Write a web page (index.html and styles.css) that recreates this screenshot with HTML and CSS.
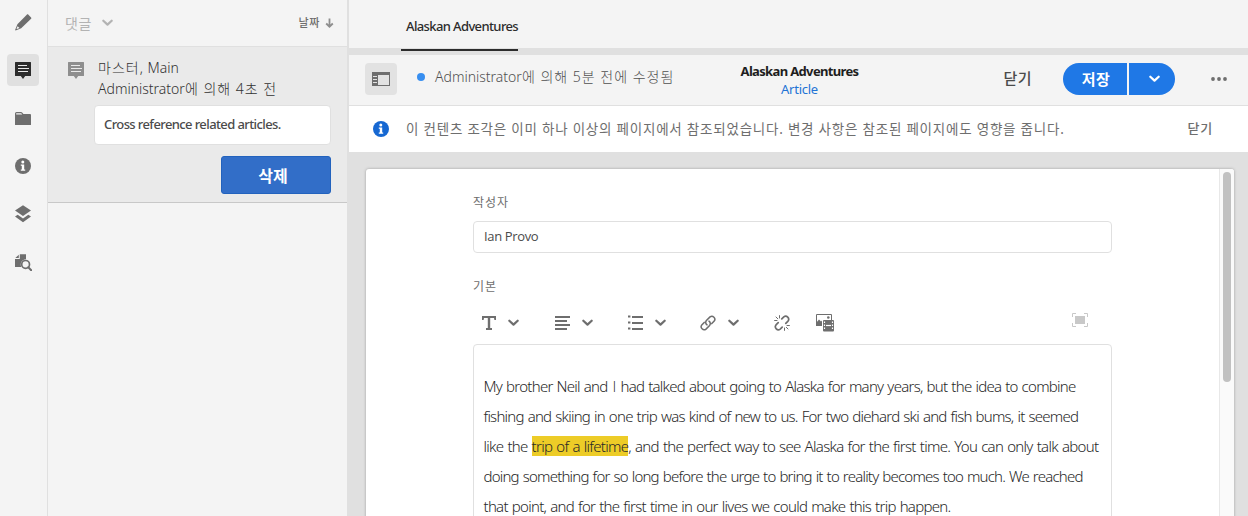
FILE: index.html
```html
<!DOCTYPE html>
<html lang="ko">
<head>
<meta charset="utf-8">
<title>Alaskan Adventures</title>
<link rel="stylesheet" href="styles.css">
</head>
<body>
<svg class="defs" width="0" height="0" aria-hidden="true">
  <symbol id="chevron" viewBox="0 0 10 7"><path d="M1.200 1.400 5 5 8.800 1.400" fill="none" stroke="currentColor" stroke-width="2" stroke-linecap="round" stroke-linejoin="round"/></symbol>
  <symbol id="comment" viewBox="0 0 16 17"><path fill="currentColor" d="M.5 0h15a.5.5 0 0 1 .5.5v13a.5.5 0 0 1-.5.5h-5.300L8 17l-2.200-3H.5a.5.5 0 0 1-.5-.5V.5A.5.5 0 0 1 .5 0Z"/><path class="comment-lines" d="M3 3.500h9M3 6.500h11M3 9.500h10"/></symbol>
  <symbol id="info" viewBox="0 0 16 16"><circle cx="8" cy="8" r="8" fill="currentColor"/><circle class="info-mark" cx="7.800" cy="3.900" r="1.500"/><path class="info-mark" d="M5.800 6.500h3.400v5h1v1.300H5.800v-1.300h1V7.800h-1Z"/></symbol>
</svg>
<div class="app">
  <nav class="rail">
    <a class="rail-item"><svg width="17" height="17" viewBox="0 0 17 17"><path fill="currentColor" d="m13.200.5 2.900 2.900c.4.400.4.900 0 1.300L6.200 14.300.6 16.400l-.5-.5 2.300-5.600L12 .5c.4-.4.800-.4 1.200 0Z"/><path class="pencil-tip" d="m2.600 12.200 1.900 1.900-2.500 1-.5-.5Z"/></svg></a>
    <a class="rail-item selected"><svg width="16" height="17"><use href="#comment"/></svg></a>
    <a class="rail-item"><svg width="16" height="13" viewBox="0 0 16 13"><path fill="currentColor" d="M0 1.500Q0 0 1.500 0h4.300Q7 0 7.600 1l.8 1H15q1 0 1 1v9.500q0 .5-.5.500H.5q-.5 0-.5-.5Z"/><path class="folder-tab" d="M1.200 1.200h5l1 1.400H1.200Z"/></svg></a>
    <a class="rail-item"><svg width="16" height="16"><use href="#info"/></svg></a>
    <a class="rail-item"><svg width="16" height="18" viewBox="0 0 16 18"><path fill="currentColor" d="m8 .3 8 5.300-8 5.400-8-5.400ZM2.700 9.800 8 13.400l5.300-3.600 2.700 1.800-8 5.700-8-5.700Z"/></svg></a>
    <a class="rail-item"><svg width="17" height="17" viewBox="0 0 17 17"><path fill="currentColor" d="M4.800.300h6.200v5A5.300 5.300 0 0 0 6.300 13H0V5h4.800ZM3.800.700V4H.3Z"/><circle cx="10.600" cy="10.400" r="3.900" fill="none" stroke="currentColor" stroke-width="1.700"/><path d="m13.300 13.200 2.900 3" stroke="currentColor" stroke-width="2" stroke-linecap="round"/></svg></a>
  </nav>

  <aside class="panel">
    <header class="panel-head">
      <span class="panel-title">댓글</span>
      <svg class="panel-chevron" width="11" height="8"><use href="#chevron"/></svg>
      <span class="sort">날짜</span>
      <svg class="sort-arrow" width="9" height="10" viewBox="0 0 9 10"><path d="M4.500.5v8M1.200 5.500 4.500 8.700l3.300-3.200" fill="none" stroke="currentColor" stroke-width="1.800"/></svg>
    </header>
    <article class="note">
      <svg class="note-icon" width="16" height="17"><use href="#comment"/></svg>
      <div class="note-meta"><div><span class="ko">마스터,</span> Main</div><div>Administrator<span class="ko">에 의해 4초 전</span></div></div>
      <p class="note-text">Cross reference related articles.</p>
      <button class="delete">삭제</button>
    </article>
  </aside>

  <main class="main">
    <div class="tabs"><span class="tab">Alaskan Adventures</span></div>
    <header class="toolbar">
      <button class="toggle"><svg width="18" height="14" viewBox="0 0 18 14"><path fill="currentColor" fill-rule="evenodd" d="M0 0h18v14H0ZM6 3v10h11V3ZM1 4h4v1H1ZM1 7h4v1H1ZM1 10h4v1H1Z"/></svg></button>
      <i class="dot"></i>
      <span class="modified">Administrator<span class="ko">에 의해 5분 전에 수정됨</span></span>
      <div class="title"><b>Alaskan Adventures</b><a>Article</a></div>
      <span class="close">닫기</span>
      <div class="save"><button class="save-main">저장</button><button class="save-more"><svg width="11" height="8"><use href="#chevron"/></svg></button></div>
      <svg class="more" width="16" height="4" viewBox="0 0 16 4"><g fill="currentColor"><circle cx="2" cy="2" r="1.900"/><circle cx="8" cy="2" r="1.900"/><circle cx="14" cy="2" r="1.900"/></g></svg>
    </header>
    <div class="alert">
      <svg class="alert-icon" width="16" height="16"><use href="#info"/></svg>
      <span class="alert-text">이 컨텐츠 조각은 이미 하나 이상의 페이지에서 참조되었습니다. 변경 사항은 참조된 페이지에도 영향을 줍니다.</span>
      <span class="alert-close">닫기</span>
    </div>
    <div class="canvas">
      <section class="paper">
        <div class="form">
          <label class="label">작성자</label>
          <div class="input">Ian Provo</div>
          <label class="label body-label">기본</label>
          <div class="rte-bar">
            <span class="tool"><svg width="14" height="14" viewBox="0 0 14 14"><path fill="currentColor" d="M0 0h14v4h-1.600L12 2H8.200v10H10v2H4v-2h1.800V2H2l-.4 2H0Z"/></svg><svg width="11" height="8"><use href="#chevron"/></svg></span>
            <span class="tool"><svg width="15" height="14" viewBox="0 0 15 14"><path d="M0 1h15M0 5h12M0 9h15M0 13h12" stroke="currentColor" stroke-width="1.900"/></svg><svg width="11" height="8"><use href="#chevron"/></svg></span>
            <span class="tool"><svg width="15" height="15" viewBox="0 0 15 15"><path d="M4 2h11M4 8h11M4 14h11" stroke="currentColor" stroke-width="1.900"/><path d="M0 1.500h2.400M0 7.500h2.400M0 13.500h2.400" stroke="currentColor" stroke-width="2"/></svg><svg width="11" height="8"><use href="#chevron"/></svg></span>
            <span class="tool link"><svg width="16" height="16" viewBox="0 0 16 16"><g fill="none" stroke="currentColor" stroke-width="1.500" stroke-linecap="round"><path d="M7 9.900a2.900 2.900 0 0 1-.6-4.300l3.600-3.700a3 3 0 0 1 4.200 4.200l-2.400 2.500"/><path d="M9 6.100a2.900 2.900 0 0 1 .6 4.300L6 14.100a3 3 0 0 1-4.200-4.200l2.400-2.500"/></g></svg><svg width="11" height="8"><use href="#chevron"/></svg></span>
            <svg class="unlink" width="16" height="16" viewBox="0 0 16 16"><g fill="none" stroke="currentColor" stroke-linecap="round"><path stroke-width="1.700" d="m7.800 3.900 2-2a3 3 0 0 1 4.200 4.200l-2.200 2.200M8.200 12.100l-2 2A3 3 0 0 1 2 9.900l2.200-2.200"/><path stroke-width="1" d="M5.500.6V3M.6 5.500H3M2 2l1.800 1.800M10.500 13v2.400M13 10.500h2.400M12.300 12.300 14 14"/></g></svg>
            <svg class="media" width="18" height="18" viewBox="0 0 18 18"><path fill="none" stroke="currentColor" d="M.5 11.500V.5h15V6"/><path fill="currentColor" d="M0 9 3 5.500l2 2L6 6.500V12H0Z"/><circle cx="12.300" cy="3.500" r="1.300" fill="currentColor"/><rect x="7" y="6" width="11" height="11.500" rx="1" fill="currentColor"/><path class="film-slot" d="M10 11.500h5"/><path class="film" d="M8.500 7.500v9M16.500 7.500v9"/></svg>
            <svg class="expand" width="16" height="14" viewBox="0 0 16 14"><rect x="3" y="3" width="10" height="8" fill="currentColor"/><path fill="none" stroke="currentColor" d="M.5 4V.5H4M12 .5h3.500V4M15.500 10v3.500H12M4 13.500H.5V10"/></svg>
          </div>
          <div class="rte">
            <p class="story"><span class="line l1">My brother Neil and <span class="sans-i">I</span> had talked about going to Alaska for many years, but the idea to combine</span> <span class="line l2">fishing and skiing in one trip was kind of new to us. For two diehard ski and fish bums, it seemed</span> <span class="line l3">like the <mark>trip of a lifetime</mark>, and the perfect way to see Alaska for the first time. You can only talk about</span> <span class="line l4">doing something for so long before the urge to bring it to reality becomes too much. We reached</span> <span class="line l5">that point, and for the first time in our lives we could make this trip happen.</span></p>
          </div>
        </div>
        <div class="track"><div class="thumb"></div></div>
      </section>
    </div>
  </main>
</div>
</body>
</html>
```
FILE: styles.css
```css
* { box-sizing: border-box; }
body { margin: 0; background: #f4f4f4; color: #4b4b4b; font: 14px "Noto Sans", "Noto Sans CJK KR", sans-serif; overflow: hidden; }
button { border: 0; padding: 0; font: inherit; }
p { margin: 0; }
svg { display: block; flex: none; }
span, b, a { white-space: nowrap; }
.defs { position: absolute; }
.ko { letter-spacing: 1px; }
.app { display: flex; width: 1248px; height: 516px; overflow: hidden; }

.rail { width: 48px; border-right: 1px solid #e0e0e0; padding: 6px 0 0 7px; display: flex; flex-direction: column; gap: 16px; flex: none; color: #6e6e6e; }
.rail-item { width: 32px; height: 32px; border-radius: 4px; display: flex; align-items: center; justify-content: center; }
.rail-item.selected { background: #e0e0e0; color: #2c2c2c; }
.comment-lines { fill: none; stroke: #eaeaea; stroke-width: 1; }
.info-mark { fill: #fff; }
.pencil-tip, .folder-tab { fill: #f4f4f4; }

.panel { width: 301px; flex: none; border-right: 2px solid #e0e0e0; }
.panel-head { height: 47px; border-bottom: 1px solid #e0e0e0; padding: 0 13px 0 17px; display: flex; align-items: center; color: #b3b3b3; }
.panel-title { font-size: 14px; letter-spacing: 0.5px; }
.panel-chevron { margin-left: 10px; }
.sort { margin-left: auto; font-size: 11px; font-weight: 500; letter-spacing: 0.6px; color: #6e6e6e; padding-bottom: 2px; }
.sort-arrow { margin-left: 5px; color: #8e8e8e; }
.note { height: 156px; background: #eaeaea; border-bottom: 1px solid #c8c8c8; padding: 10px 16px 0 46px; position: relative; }
.note-icon { position: absolute; left: 20px; top: 15px; color: #8e8e8e; }
.note-meta { padding-left: 4px; font-size: 14px; line-height: 21px; font-weight: 300; color: #323232; }
.note-text { margin-top: 6px; height: 40px; border: 1px solid #e0e0e0; border-radius: 4px; background: #fff; padding-left: 9px; font-size: 13px; line-height: 36px; font-weight: 500; letter-spacing: -0.6px; }
.delete { display: block; margin: 11px 0 0 auto; width: 110px; height: 38px; padding: 0 6px 1px 0; border: 1px solid #2262bd; border-radius: 3px; background: #326ec8; color: #fff; font-size: 16px; font-weight: 700; }

.main { flex: 1; min-width: 0; display: flex; flex-direction: column; background: #e0e0e0; }
.tabs { height: 48px; background: #f4f4f4; padding-left: 52px; flex: none; }
.tab { display: block; width: 117px; height: 51px; padding-left: 5px; border-bottom: 2px solid #2c2c2c; font-size: 13px; line-height: 52px; font-weight: 500; letter-spacing: -0.62px; color: #2c2c2c; }
.toolbar { margin-top: 7px; height: 51px; flex: none; background: #f4f4f4; border-bottom: 1px solid #e0e0e0; display: flex; align-items: center; padding: 0 21px 2px 16px; position: relative; }
.toggle { width: 32px; height: 32px; border-radius: 4px; background: #e2e2e2; color: #6e6e6e; display: grid; place-items: center; flex: none; }
.dot { width: 8px; height: 8px; border-radius: 50%; background: #378ef0; margin-left: 20px; margin-bottom: 4px; }
.modified { margin-left: 10px; margin-bottom: 6px; font-size: 14px; font-weight: 300; color: #505050; }
.title { position: absolute; left: 2px; right: 0; top: 7px; display: flex; flex-direction: column; align-items: center; line-height: 18px; font-size: 13px; letter-spacing: -0.65px; color: #1e1e1e; }
.title a { color: #2273d5; letter-spacing: -0.25px; }
.close { margin-left: auto; padding-bottom: 4px; font-size: 15px; font-weight: 500; letter-spacing: 0.5px; }
.save { margin-left: 31px; display: flex; gap: 2px; color: #fff; }
.save-main, .save-more { height: 32px; background: #1f78e6; color: #fff; display: grid; place-items: center; }
.save-main { width: 64px; border-radius: 16px 0 0 16px; padding: 0 0 2px 2px; font-size: 15px; font-weight: 700; letter-spacing: 0.5px; }
.save-more { width: 46px; border-radius: 0 16px 16px 0; padding-left: 4px; }
.more { margin-left: 36px; color: #6e6e6e; }
.alert { height: 46px; flex: none; background: #fff; display: flex; align-items: center; padding: 0 35px 0 24px; color: #6e6e6e; }
.alert-icon { color: #1668d2; }
.alert-text { margin-left: 17px; padding-bottom: 2px; font-size: 13.5px; letter-spacing: 0.78px; }
.alert-close { margin-left: auto; padding-bottom: 3px; font-size: 13px; font-weight: 500; letter-spacing: 0.8px; }
.canvas { flex: 1; padding: 17px 14px 0 17px; }
.paper { height: 400px; background: #fff; border-radius: 3px; box-shadow: 0 0 3px #9c9c9c; display: flex; overflow: hidden; }
.form { flex: 1; min-width: 0; padding: 25px 107px 0 107px; }
.label { display: block; height: 18px; font-size: 12px; line-height: 18px; letter-spacing: 0.9px; color: #6e6e6e; }
.input { margin-top: 9px; height: 32px; border: 1px solid #e0e0e0; border-radius: 4px; padding-left: 10px; font: 500 13px/28px "Open Sans", sans-serif; letter-spacing: -0.35px; }
.body-label { margin-top: 25px; }
.rte-bar { height: 41px; margin-top: 6px; margin-bottom: 1px; display: flex; align-items: center; padding: 0 24px 0 9px; color: #6e6e6e; }
.tool { width: 73px; display: flex; align-items: center; gap: 12px; }
.tool.link { margin-left: -1px; width: 74px; }
.media { margin-left: 26px; }
.film, .film-slot { stroke: #fff; stroke-width: 1.200; }
.film { stroke-dasharray: 1.500 1.500; }
.expand { margin-left: auto; color: #c8c8c8; margin-bottom: 6px; }
.rte { height: 300px; border: 1px solid #e0e0e0; border-radius: 4px; padding: 26px 0 0 9.500px; }
.story { font-size: 15px; line-height: 30px; font-weight: 300; color: #282828; word-spacing: 0.8px; }
.line { display: table; }
.sans-i { font-family: "Open Sans", sans-serif; padding: 0 1px; }
.l1 { letter-spacing: -0.74px; }
.l2 { letter-spacing: -0.76px; }
.l3 { letter-spacing: -0.70px; }
.l4 { letter-spacing: -0.79px; }
.l5 { letter-spacing: -0.72px; }
mark { background: #edcc27; color: inherit; }
.track { width: 15px; border-left: 1px solid #e8e8e8; background: #fafafa; padding: 3px 3px 0; }
.thumb { width: 8px; height: 210px; border-radius: 4px; background: #c1c1c1; }
```
